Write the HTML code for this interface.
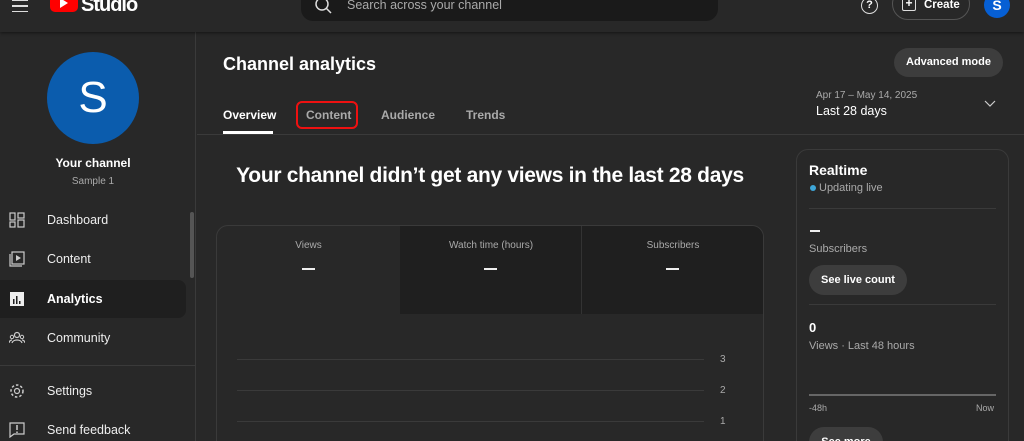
<!DOCTYPE html>
<html style="overflow:hidden;height:441px"><head><style>
*{box-sizing:border-box;margin:0;padding:0}
body{width:1024px;height:441px;overflow:hidden;background:#282828;font-family:"Liberation Sans",sans-serif;color:#fff;position:relative}
.a{position:absolute}
.hdr{left:0;top:0;width:1024px;height:32px;background:#282828;box-shadow:0 1px 3px rgba(0,0,0,.5);z-index:2}
.side{left:0;top:32px;width:196px;height:409px;border-right:1px solid #3a3a3a}
.nav{position:absolute;left:0;width:186px;height:38px;font-size:12.5px;color:#eee;padding-left:47px;line-height:38px}
.nav svg{position:absolute;left:9px;top:11px}
.tab{font-size:12px;font-weight:bold;color:#aaa;top:108px}
.muted{color:#aaa}
.btn{background:#3d3d3d;border-radius:16px;font-weight:bold;font-size:11px;text-align:center}
.gl{height:1px;background:#3a3a3a;left:237px;width:467px}
.yl{font-size:10px;color:#aaa;left:720px}
</style></head><body>
<div class="a hdr">
  <div class="a" style="left:12px;top:0;width:16px;height:12px;border-top:1.5px solid #ddd;border-bottom:1.5px solid #ddd"></div>
  <div class="a" style="left:12px;top:5px;width:16px;height:1.5px;background:#ddd"></div>
  <div class="a" style="left:50px;top:-8px;width:28px;height:20px;background:#f00;border-radius:5px"></div>
  <div class="a" style="left:60px;top:-2px;width:0;height:0;border-left:8px solid #fff;border-top:5px solid transparent;border-bottom:5px solid transparent"></div>
  <div class="a" style="left:81px;top:-6px;font-size:20px;font-weight:bold;letter-spacing:-1px">Studio</div>
  <div class="a" style="left:301px;top:-12px;width:417px;height:33px;background:#1a1a1a;border-radius:12px"></div>
  <svg class="a" style="left:314px;top:-3px" width="18" height="18"><circle cx="8" cy="7" r="6" stroke="#ddd" stroke-width="1.5" fill="none"/><path d="M12 11l5 5" stroke="#ddd" stroke-width="1.5"/></svg>
  <div class="a muted" style="left:347px;top:-2px;font-size:12.5px">Search across your channel</div>
  <div class="a" style="left:861px;top:-3px;width:17px;height:17px;border:1.5px solid #ddd;border-radius:50%;font-size:11px;text-align:center;line-height:14px;font-weight:bold">?</div>
  <div class="a" style="left:892px;top:-12px;width:78px;height:32px;border:1px solid #555;border-radius:16px"></div>
  <div class="a" style="left:902px;top:-2px;width:14px;height:13px;border:1.5px solid #ddd;border-radius:2px;font-size:12px;line-height:9px;text-align:center;font-weight:bold">+</div>
  <div class="a" style="left:924px;top:-1px;font-size:11.5px;font-weight:bold">Create</div>
  <div class="a" style="left:984px;top:-8px;width:26px;height:26px;background:#065fd4;border-radius:50%;text-align:center;font-size:14px;font-weight:bold;line-height:26px">S</div>
</div>
<div class="a side"></div>
<div class="a" style="left:47px;top:52px;width:92px;height:92px;background:#0b5cad;border-radius:50%;text-align:center;line-height:92px;font-size:44px">S</div>
<div class="a" style="left:0;width:186px;top:156px;text-align:center;font-size:12px;font-weight:bold">Your channel</div>
<div class="a muted" style="left:0;width:186px;top:176px;text-align:center;font-size:10px">Sample 1</div>
<div class="a" style="left:190px;top:212px;width:4px;height:66px;background:#555;border-radius:2px"></div>
<div class="nav" style="top:201px"><svg width="16" height="16"><rect x="1" y="1" width="5" height="7" fill="none" stroke="#ccc" stroke-width="1.2"/><rect x="1" y="10" width="5" height="5" fill="none" stroke="#ccc" stroke-width="1.2"/><rect x="9" y="1" width="6" height="5" fill="none" stroke="#ccc" stroke-width="1.2"/><rect x="9" y="8" width="6" height="7" fill="none" stroke="#ccc" stroke-width="1.2"/></svg>Dashboard</div>
<div class="nav" style="top:240px"><svg width="16" height="16"><rect x="3" y="1" width="12" height="12" fill="none" stroke="#ccc" stroke-width="1.2"/><path d="M1 3v12h12" fill="none" stroke="#ccc" stroke-width="1.2"/><path d="M7 4l5 3-5 3z" fill="#ccc"/></svg>Content</div>
<div class="nav" style="top:280px;background:#1f1f1f;border-radius:0 8px 8px 0;font-weight:bold;color:#fff"><svg width="16" height="16"><rect x="1" y="1" width="14" height="14" fill="#eee"/><rect x="4" y="8" width="1.5" height="5" fill="#1f1f1f"/><rect x="7" y="5" width="1.5" height="8" fill="#1f1f1f"/><rect x="10" y="10" width="1.5" height="3" fill="#1f1f1f"/></svg>Analytics</div>
<div class="nav" style="top:319px"><svg width="16" height="16"><circle cx="8" cy="5" r="2.5" fill="none" stroke="#ccc" stroke-width="1.2"/><circle cx="3" cy="7" r="1.7" fill="none" stroke="#ccc"/><circle cx="13" cy="7" r="1.7" fill="none" stroke="#ccc"/><path d="M3 13c1-4 9-4 10 0M0 13c0-2 2-3 3-3M16 13c0-2-2-3-3-3" fill="none" stroke="#ccc" stroke-width="1.2"/></svg>Community</div>
<div class="a" style="left:0;top:365px;width:196px;height:1px;background:#3a3a3a"></div>
<div class="nav" style="top:372px"><svg width="16" height="16"><circle cx="8" cy="8" r="2.5" fill="none" stroke="#ccc" stroke-width="1.2"/><circle cx="8" cy="8" r="6" fill="none" stroke="#ccc" stroke-width="1.5" stroke-dasharray="2.5 2"/></svg>Settings</div>
<div class="nav" style="top:411px"><svg width="16" height="16"><path d="M1 1h14v11H5l-4 3z" fill="none" stroke="#ccc" stroke-width="1.2"/><path d="M8 3v5M8 9.5v1.5" stroke="#ccc" stroke-width="1.5"/></svg>Send feedback</div>

<div class="a" style="left:223px;top:54px;font-size:18px;font-weight:bold">Channel analytics</div>
<div class="a btn" style="left:894px;top:48px;width:109px;height:29px;line-height:29px">Advanced mode</div>
<div class="a tab" style="left:223px;color:#fff">Overview</div>
<div class="a" style="left:223px;top:131px;width:50px;height:3px;background:#fff"></div>
<div class="a" style="left:296px;top:101px;width:62px;height:28px;border:2px solid #e11;border-radius:6px"></div>
<div class="a tab" style="left:306px">Content</div>
<div class="a tab" style="left:381px">Audience</div>
<div class="a tab" style="left:466px">Trends</div>
<div class="a muted" style="left:816px;top:90px;font-size:10px">Apr 17 – May 14, 2025</div>
<div class="a" style="left:816px;top:104px;font-size:12.5px">Last 28 days</div>
<svg class="a" style="left:984px;top:100px" width="12" height="8"><path d="M1 1l5 5 5-5" fill="none" stroke="#ccc" stroke-width="1.2"/></svg>
<div class="a" style="left:197px;top:134px;width:827px;height:1px;background:#3a3a3a"></div>

<div class="a" style="left:180px;top:164px;width:620px;text-align:center;font-size:21px;font-weight:bold;letter-spacing:-0.3px;white-space:nowrap">Your channel didn’t get any views in the last 28 days</div>
<div class="a" style="left:216px;top:225px;width:548px;height:230px;border:1px solid #3a3a3a;border-radius:12px;overflow:hidden">
  <div class="a" style="left:183px;top:0;width:365px;height:88px;background:#1f1f1f"></div>
  <div class="a" style="left:364px;top:0;width:1px;height:88px;background:#333"></div>
  <div class="a muted" style="left:0;width:183px;top:14px;text-align:center;font-size:10px">Views</div>
  <div class="a muted" style="left:183px;width:182px;top:14px;text-align:center;font-size:10px">Watch time (hours)</div>
  <div class="a muted" style="left:365px;width:182px;top:14px;text-align:center;font-size:10px">Subscribers</div>
  <div class="a" style="left:85px;top:42px;width:13px;height:2px;background:#eee"></div>
  <div class="a" style="left:267px;top:42px;width:13px;height:2px;background:#eee"></div>
  <div class="a" style="left:449px;top:42px;width:13px;height:2px;background:#eee"></div>
</div>
<div class="a gl" style="top:359px"></div><div class="a yl" style="top:354px">3</div>
<div class="a gl" style="top:390px"></div><div class="a yl" style="top:385px">2</div>
<div class="a gl" style="top:421px"></div><div class="a yl" style="top:416px">1</div>

<div class="a" style="left:796px;top:149px;width:213px;height:310px;border:1px solid #3a3a3a;border-radius:12px"></div>
<div class="a" style="left:809px;top:162px;font-size:14px;font-weight:bold">Realtime</div>
<div class="a" style="left:810px;top:185px;width:6px;height:6px;background:#3ea6d8;border-radius:50%"></div>
<div class="a muted" style="left:819px;top:182px;font-size:11px">Updating live</div>
<div class="a" style="left:809px;top:208px;width:187px;height:1px;background:#3a3a3a"></div>
<div class="a" style="left:810px;top:230px;width:10px;height:2px;background:#eee"></div>
<div class="a muted" style="left:809px;top:243px;font-size:11px">Subscribers</div>
<div class="a btn" style="left:809px;top:265px;width:98px;height:30px;line-height:30px">See live count</div>
<div class="a" style="left:809px;top:304px;width:187px;height:1px;background:#3a3a3a"></div>
<div class="a" style="left:809px;top:320px;font-size:13px;font-weight:bold">0</div>
<div class="a muted" style="left:809px;top:340px;font-size:11px">Views · Last 48 hours</div>
<div class="a" style="left:809px;top:394px;width:187px;height:2px;background:#666"></div>
<div class="a muted" style="left:809px;top:403px;font-size:9px">-48h</div>
<div class="a muted" style="left:976px;top:403px;font-size:9px">Now</div>
<div class="a btn" style="left:809px;top:427px;width:74px;height:30px;line-height:30px">See more</div>
</body></html>
